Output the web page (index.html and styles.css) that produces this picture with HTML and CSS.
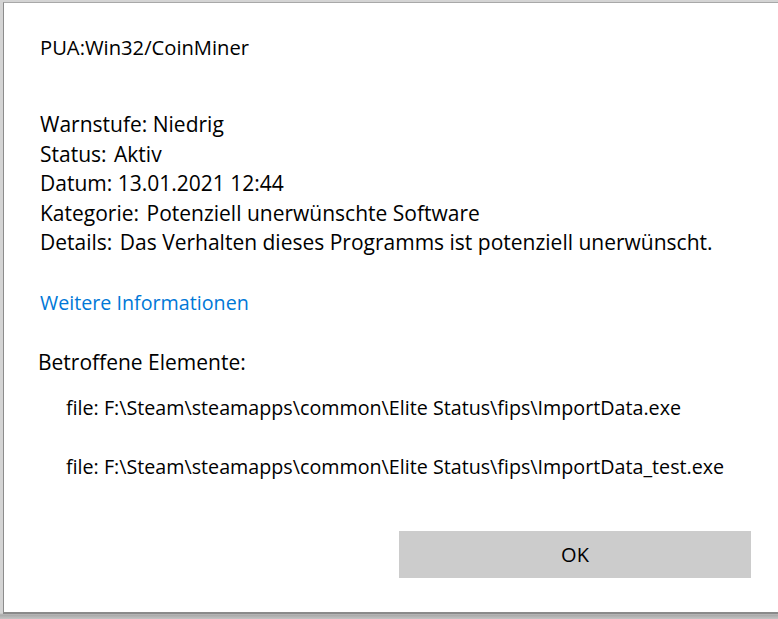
FILE: index.html
```html
<!DOCTYPE html>
<html lang="de">
<head>
<meta charset="utf-8">
<title>PUA:Win32/CoinMiner</title>
<link rel="stylesheet" href="styles.css">
</head>
<body>
<div class="window">
  <div class="content">
    <div class="title">PUA:Win32/CoinMiner</div>
    <div class="props">
      <div class="row"><span class="label">Warnstufe:</span> <span class="value">Niedrig</span></div>
      <div class="row"><span class="label">Status:</span> <span class="value gap">Aktiv</span></div>
      <div class="row"><span class="label">Datum:</span> <span class="value">13.01.2021 12:44</span></div>
      <div class="row"><span class="label">Kategorie:</span> <span class="value gap">Potenziell unerwünschte Software</span></div>
      <div class="row"><span class="label">Details:</span> <span class="value gap">Das Verhalten dieses Programms ist potenziell unerwünscht.</span></div>
    </div>
    <a class="link" href="#">Weitere Informationen</a>
    <div class="affected">Betroffene Elemente:</div>
    <ul class="files">
      <li>file: F:\Steam\steamapps\common\Elite Status\fips\ImportData.exe</li>
      <li>file: F:\Steam\steamapps\common\Elite Status\fips\ImportData_test.exe</li>
    </ul>
    <div class="actions">
      <button class="ok" type="button">OK</button>
    </div>
  </div>
</div>
</body>
</html>
```
FILE: styles.css
```css
html, body {
  margin: 0;
  padding: 0;
}
body {
  width: 778px;
  height: 619px;
  overflow: hidden;
  background: linear-gradient(to bottom, #d4d4d4 0, #d4d4d4 613px, #a8a8a8 615px, #c4c4c4 619px);
  font-family: "Open Sans", "Noto Sans", "DejaVu Sans", sans-serif;
  color: #000;
}
.window {
  margin: 2px 0 0 3px;
  height: 609px;
  background: #fff;
  border-top: 1px solid #a8a8a8;
  border-left: 1px solid #8c8c8c;
  border-bottom: 2px solid #8a8a8a;
  box-sizing: content-box;
}
.content {
  padding: 0 0 0 36px;
}
.title {
  padding-top: 32px;
  font-size: 20.2px;
  line-height: 24px;
}
.props {
  margin-top: 51px;
  font-size: 21px;
  line-height: 29.5px;
}
.gap {
  margin-left: 2px;
}
.link {
  display: inline-block;
  margin-top: 32px;
  font-size: 19.7px;
  line-height: 26px;
  color: #0078d7;
  text-decoration: none;
}
.affected {
  margin-top: 33px;
  margin-left: -2px;
  font-size: 21px;
  line-height: 26px;
}
.files {
  list-style: none;
  margin: 21px 0 0 26px;
  padding: 0;
  font-size: 19.7px;
  line-height: 24px;
}
.files li + li {
  margin-top: 35px;
}
.actions {
  display: flex;
  justify-content: flex-end;
  margin-top: 52px;
  padding-right: 27px;
}
.ok {
  width: 352px;
  height: 47px;
  border: 0;
  padding: 0;
  background: #cccccc;
  color: #000;
  font-family: inherit;
  font-size: 20px;
}
```
